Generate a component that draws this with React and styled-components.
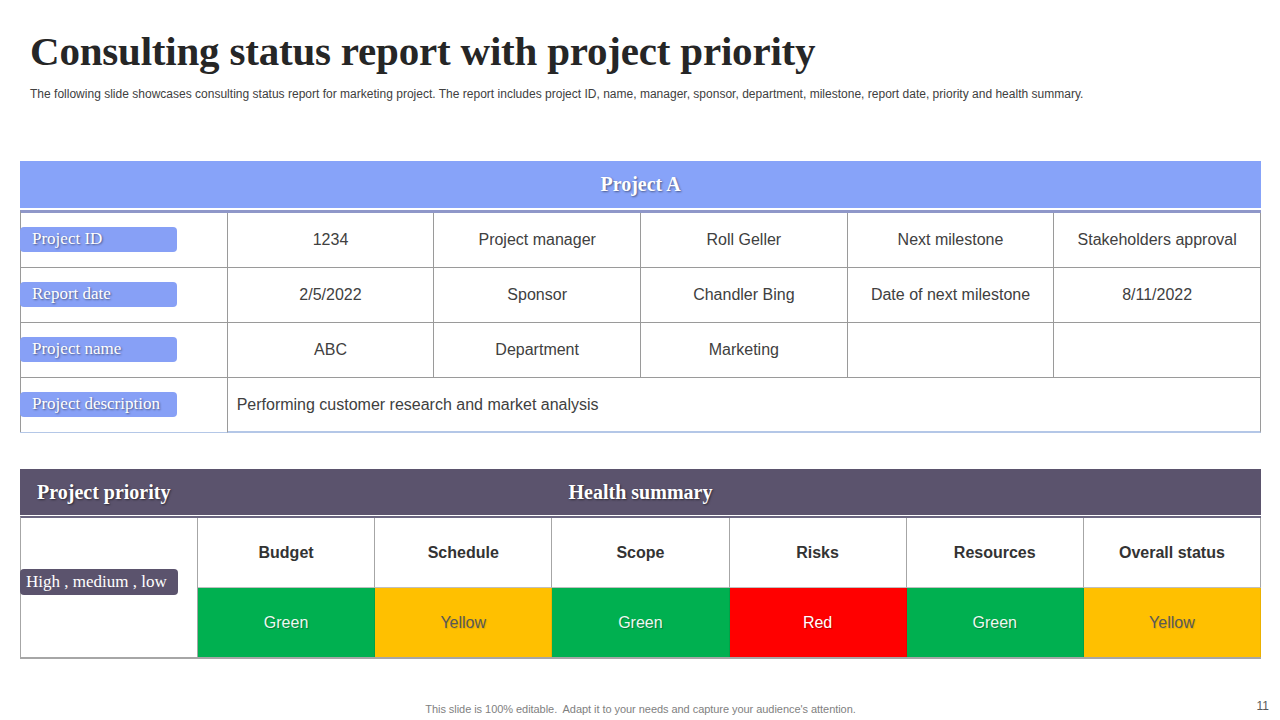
import React from "react";
import styled, { createGlobalStyle } from "styled-components";

const topRows = [
  { label: "Project ID", cells: ["1234", "Project manager", "Roll Geller", "Next milestone", "Stakeholders approval"] },
  { label: "Report date", cells: ["2/5/2022", "Sponsor", "Chandler Bing", "Date of next milestone", "8/11/2022"] },
  { label: "Project name", cells: ["ABC", "Department", "Marketing", "", ""] },
];

const health = [
  { name: "Budget", status: "Green" },
  { name: "Schedule", status: "Yellow" },
  { name: "Scope", status: "Green" },
  { name: "Risks", status: "Red" },
  { name: "Resources", status: "Green" },
  { name: "Overall status", status: "Yellow" },
];

const statusColors = {
  Green: { bg: "#00b050", fg: "#eef8f1", shadow: "rgba(0, 0, 0, 0.3)" },
  Yellow: { bg: "#ffc000", fg: "#595959", shadow: "rgba(0, 0, 0, 0.12)" },
  Red: { bg: "#ff0000", fg: "#ffffff", shadow: "rgba(0, 0, 0, 0.3)" },
};

const App = () => {
  return (
    <>
      <GlobalStyle />
      <Slide>
        <Title>Consulting status report with project priority</Title>
        <Subtitle>
          The following slide showcases consulting status report for marketing project. The report includes project ID,
          name, manager, sponsor, department, milestone, report date, priority and health summary.
        </Subtitle>

        <ProjectSection>
          <BlueHeader>Project A</BlueHeader>
          <ProjectGrid>
            {topRows.map((row) => (
              <React.Fragment key={row.label}>
                <LabelCell>
                  <Pill>{row.label}</Pill>
                </LabelCell>
                {row.cells.map((c, i) => (
                  <Cell key={i}>{c}</Cell>
                ))}
              </React.Fragment>
            ))}
            <LabelCell $last>
              <Pill>Project description</Pill>
            </LabelCell>
            <DescCell>Performing customer research and market analysis</DescCell>
          </ProjectGrid>
        </ProjectSection>

        <HealthSection>
          <DarkHeader>
            <PriorityHead>Project priority</PriorityHead>
            <HealthHead>Health summary</HealthHead>
          </DarkHeader>
          <HealthGrid>
            <PriorityCell>
              <DarkPill>High , medium , low</DarkPill>
            </PriorityCell>
            {health.map((h) => (
              <HeadCell key={h.name}>{h.name}</HeadCell>
            ))}
            {health.map((h) => {
              const c = statusColors[h.status];
              return (
                <StatusCell key={h.name} $bg={c.bg} $fg={c.fg} $shadow={c.shadow}>
                  {h.status}
                </StatusCell>
              );
            })}
          </HealthGrid>
        </HealthSection>

        <Footer>
          <FooterNote>This slide is 100% editable.  Adapt it to your needs and capture your audience's attention.</FooterNote>
          <PageNum>11</PageNum>
        </Footer>
      </Slide>
    </>
  );
};

const GlobalStyle = createGlobalStyle`
  html, body {
    margin: 0;
    padding: 0;
    background: #ffffff;
  }
  * {
    box-sizing: border-box;
  }
`;

const Slide = styled.div`
  width: 1280px;
  height: 720px;
  padding: 0 19px 0 20px;
  display: flex;
  flex-direction: column;
  font-family: "Liberation Sans", Arial, sans-serif;
  color: #404040;
  overflow: hidden;
`;

const Title = styled.h1`
  margin: 27px 0 0 10px;
  font-family: "Liberation Serif", "Times New Roman", serif;
  font-weight: bold;
  font-size: 41px;
  line-height: 48px;
  color: #262626;
  letter-spacing: -0.2px;
`;

const Subtitle = styled.p`
  margin: 12px 0 0 10px;
  font-size: 12px;
  line-height: 14px;
  color: #404040;
  letter-spacing: 0.01px;
  white-space: nowrap;
`;

const ProjectSection = styled.div`
  margin-top: 60px;
  display: flex;
  flex-direction: column;
`;

const BlueHeader = styled.div`
  height: 49px;
  background: #87a3f9;
  display: flex;
  align-items: center;
  justify-content: center;
  font-family: "Liberation Serif", "Times New Roman", serif;
  font-weight: bold;
  font-size: 20px;
  color: #ffffff;
  text-shadow: 1px 1px 2px rgba(0, 0, 0, 0.45);
  border-bottom: 2px solid #ffffff;
`;

const ProjectGrid = styled.div`
  display: grid;
  grid-template-columns: repeat(6, 1fr);
  grid-auto-rows: 55px;
  border-top: 3px solid #8f97c9;
  border-left: 1px solid #9a9a9a;
`;

const Cell = styled.div`
  display: flex;
  align-items: center;
  justify-content: center;
  border-right: 1px solid #9a9a9a;
  border-bottom: 1px solid #9a9a9a;
  font-size: 16px;
  color: #404040;
`;

const LabelCell = styled(Cell)`
  justify-content: flex-start;
  margin-left: -1px;
  border-bottom-color: ${(p) => (p.$last ? "#b4c7e7" : "#9a9a9a")};
  padding-bottom: 2px;
`;

const DescCell = styled(Cell)`
  grid-column: span 5;
  justify-content: flex-start;
  padding-left: 9px;
  border-bottom: 2px solid #b4c7e7;
`;

const Pill = styled.div`
  width: 157px;
  height: 25px;
  border-radius: 4px;
  background: #87a0f6;
  padding-left: 12px;
  display: flex;
  align-items: center;
  font-family: "Liberation Serif", "Times New Roman", serif;
  font-size: 17px;
  color: #ffffff;
  white-space: nowrap;
  text-shadow: 1px 1px 2px rgba(0, 0, 0, 0.45);
`;

const HealthSection = styled.div`
  margin-top: 36px;
  display: flex;
  flex-direction: column;
`;

const DarkHeader = styled.div`
  height: 47px;
  background: #5b536d;
  border-bottom: 1px solid #ffffff;
  display: grid;
  grid-template-areas: "head";
  align-items: center;
  font-family: "Liberation Serif", "Times New Roman", serif;
  font-weight: bold;
  font-size: 20px;
  color: #ffffff;
  text-shadow: 1px 1px 2px rgba(0, 0, 0, 0.5);
`;

const PriorityHead = styled.div`
  grid-area: head;
  justify-self: start;
  padding-left: 17px;
  white-space: nowrap;
`;

const HealthHead = styled.div`
  grid-area: head;
  justify-self: center;
  white-space: nowrap;
`;

const HealthGrid = styled.div`
  display: grid;
  grid-template-columns: 177px repeat(6, 1fr);
  grid-template-rows: 70px 69px;
  border-top: 2px solid #6b6680;
  border-left: 1px solid #a6a6a6;
  border-bottom: 2px solid #a6a6a6;
`;

const PriorityCell = styled.div`
  grid-row: span 2;
  display: flex;
  align-items: center;
  margin-left: -1px;
  border-right: 1px solid #a6a6a6;
  padding-bottom: 12px;
`;

const DarkPill = styled.div`
  width: 158px;
  height: 26px;
  border-radius: 4px;
  background: #5b536d;
  padding-left: 6px;
  display: flex;
  align-items: center;
  font-family: "Liberation Serif", "Times New Roman", serif;
  font-size: 17px;
  color: #ffffff;
  white-space: nowrap;
`;

const HeadCell = styled.div`
  display: flex;
  align-items: center;
  justify-content: center;
  border-right: 1px solid #a6a6a6;
  border-bottom: 1px solid #bfbfbf;
  font-size: 16px;
  font-weight: bold;
  color: #333333;
`;

const StatusCell = styled.div`
  display: flex;
  align-items: center;
  justify-content: center;
  background: ${(p) => p.$bg};
  color: ${(p) => p.$fg};
  font-size: 16px;
  text-shadow: 1px 1px 1px ${(p) => p.$shadow};
  border-right: 1px solid rgba(0, 0, 0, 0.08);
`;

const Footer = styled.div`
  margin-top: auto;
  height: 26px;
  display: flex;
  align-items: flex-start;
  justify-content: center;
  position: relative;
`;

const FooterNote = styled.div`
  font-size: 11px;
  color: #7f7f7f;
  letter-spacing: -0.05px;
  white-space: pre;
  padding-top: 9px;
`;

const PageNum = styled.div`
  position: absolute;
  right: -8px;
  top: 5px;
  font-size: 12px;
  color: #595959;
`;

export default App;
